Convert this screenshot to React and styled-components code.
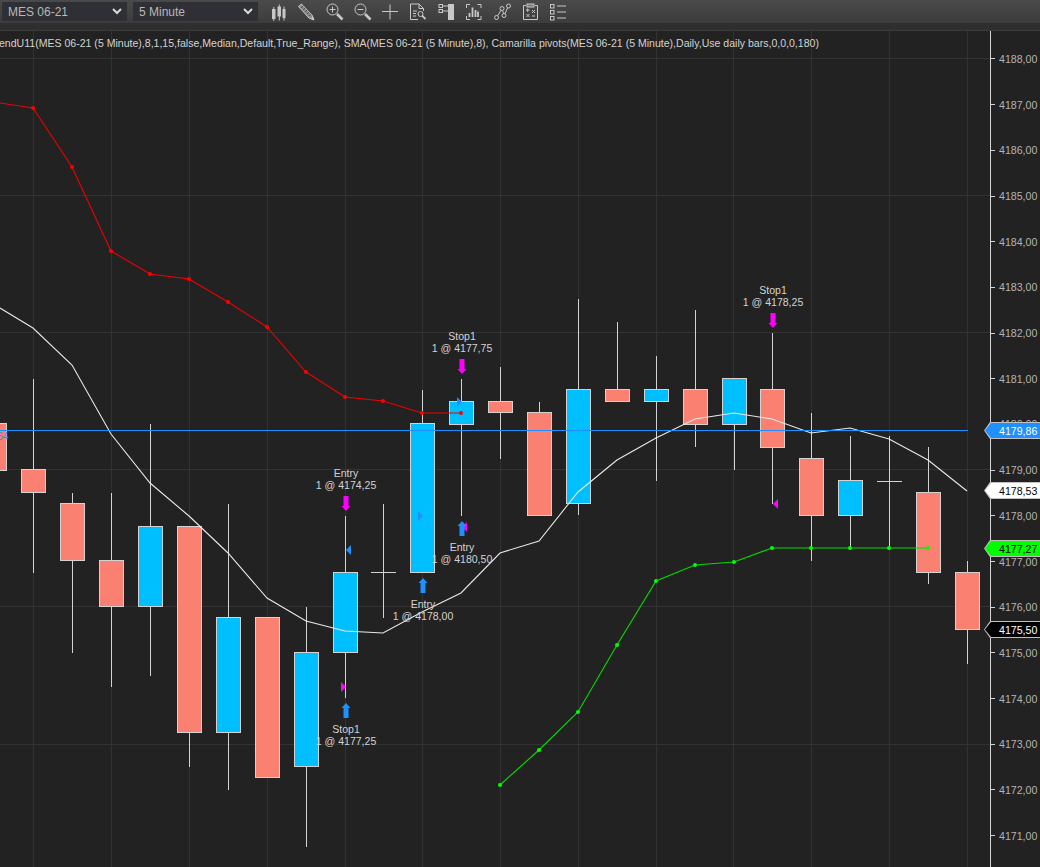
import React from "react";
import styled, { createGlobalStyle } from "styled-components";

const GlobalStyle = createGlobalStyle`
  html, body {
    margin: 0;
    padding: 0;
    background: #222222;
    overflow: hidden;
  }
`;

const BODY_W = 24;
const TOP = 31;
const PLOT_H = 836;

const priceTicks = [];
for (let p = 4188; p >= 4171; p--) priceTicks.push(p);
const priceY = (p) => 59 + (4188 - p) * 45.7;

// bars right of 345 sit a little tighter than 39px
const barX = (x) => (x <= 345 ? x : Math.round(344.5 + Math.round((x - 345) / 39) * 38.9));

// x, wick top, wick bottom, body top, body bottom, kind
const candles = [
  [-6, 423, 470, 423, 470, "down"],
  [33, 379, 573, 469, 492, "down"],
  [72, 493, 653, 503, 560, "down"],
  [111, 493, 687, 560, 606, "down"],
  [150, 424, 676, 526, 606, "up"],
  [189, 526, 767, 526, 732, "down"],
  [228, 504, 790, 617, 732, "up"],
  [267, 617, 777, 617, 777, "down"],
  [306, 607, 847, 652, 766, "up"],
  [345, 516, 698, 572, 652, "up"],
  [384, 504, 618, 572, 572, "doji"],
  [423, 390, 572, 423, 572, "up"],
  [462, 379, 516, 401, 424, "up"],
  [501, 367, 459, 401, 412, "down"],
  [540, 402, 516, 412, 515, "down"],
  [579, 299, 515, 389, 503, "up"],
  [618, 322, 401, 389, 401, "down"],
  [657, 356, 481, 389, 401, "up"],
  [696, 310, 447, 389, 424, "down"],
  [735, 378, 470, 378, 424, "up"],
  [774, 333, 504, 389, 447, "down"],
  [813, 413, 561, 458, 515, "down"],
  [852, 436, 550, 480, 515, "up"],
  [891, 436, 550, 481, 481, "doji"],
  [930, 447, 584, 492, 572, "down"],
  [969, 561, 664, 572, 629, "down"],
];

const redLine = [[0, 103], [33, 108], [72, 167], [111, 251], [150, 274], [189, 279], [228, 302], [267, 327], [306, 372], [345, 397], [384, 401], [423, 413], [462, 413]];
const whiteLine = [[0, 308], [33, 328], [72, 365], [111, 434], [150, 483], [189, 516], [228, 553], [267, 598], [306, 621], [345, 631], [384, 633], [423, 612], [462, 593], [501, 553], [540, 541], [579, 492], [618, 460], [657, 438], [696, 419], [735, 413], [774, 419], [813, 433], [852, 428], [891, 439], [930, 460], [969, 491]];
const greenLine = [[501, 785], [540, 750], [579, 712], [618, 645], [657, 581], [696, 565], [735, 562], [774, 548], [813, 548], [852, 548], [891, 548], [930, 548]];

const gridColumns = [33, 111, 189, 267, 345, 422, 500, 578, 656, 733, 811, 889, 967];

const orderLabels = [
  { x: 346, y: 477, lines: ["Entry", "1 @ 4174,25"] },
  { x: 462, y: 340, lines: ["Stop1", "1 @ 4177,75"] },
  { x: 462, y: 551, lines: ["Entry", "1 @ 4180,50"] },
  { x: 423, y: 608, lines: ["Entry", "1 @ 4178,00"] },
  { x: 346, y: 733, lines: ["Stop1", "1 @ 4177,25"] },
  { x: 773, y: 294, lines: ["Stop1", "1 @ 4178,25"] },
];

const orderArrows = [
  { x: 346, y: 496, dir: "down", color: "#ff00ff" },
  { x: 462, y: 359, dir: "down", color: "#ff00ff" },
  { x: 773, y: 313, dir: "down", color: "#ff00ff" },
  { x: 462, y: 521, dir: "up", color: "#1e90ff" },
  { x: 423, y: 578, dir: "up", color: "#1e90ff" },
  { x: 346, y: 703, dir: "up", color: "#1e90ff" },
];

// fill markers: base x, y, direction
const fillMarkers = [
  [351, 550, "left", "#1e90ff"],
  [418, 516, "right", "#1e90ff"],
  [457, 402, "right", "#1e90ff"],
  [467, 527, "left", "#ff00ff"],
  [341, 687, "right", "#ff00ff"],
  [778, 504, "left", "#ff00ff"],
];

const axisBadges = [
  { y: 430, bg: "#1e90ff", fg: "#ffffff", label: "4179,86" },
  { y: 490, bg: "#ffffff", fg: "#000000", label: "4178,53" },
  { y: 548, bg: "#00ff00", fg: "#000000", label: "4177,27" },
  { y: 629, bg: "#000000", fg: "#ffffff", label: "4175,50" },
];

const points = (line) => line.map(([x, y]) => `${barX(x)},${y}`).join(" ");

const ArrowMark = ({ x, y, dir, color }) => {
  const d =
    dir === "down"
      ? `M${x - 2.5} ${y} h5 v10 h2 l-4.5 5 l-4.5 -5 h2 z`
      : `M${x - 2.5} ${y + 15} h5 v-10 h2 l-4.5 -5 l-4.5 5 h2 z`;
  return <path d={d} fill={color} />;
};

const Candle = ({ c }) => {
  const [rawX, wickTop, wickBottom, bodyTop, bodyBottom, kind] = c;
  const x = barX(rawX);
  return (
    <g>
      <line x1={x + 0.5} x2={x + 0.5} y1={wickTop} y2={wickBottom} stroke="#d3d3d3" />
      {kind === "doji" ? (
        <line x1={x - 12} x2={x + 13} y1={bodyTop + 0.5} y2={bodyTop + 0.5} stroke="#d3d3d3" />
      ) : (
        <CandleBody
          x={x - BODY_W / 2 + 0.5}
          y={bodyTop + 0.5}
          width={BODY_W}
          height={bodyBottom - bodyTop}
          $kind={kind}
        />
      )}
    </g>
  );
};

const Dots = ({ line, color }) =>
  line.map(([x, y]) => <circle key={x} cx={barX(x)} cy={y} r="2" fill={color} />);

const ChartPlot = () => (
  <PlotSvg viewBox={`0 0 990 ${PLOT_H}`} width="990" height={PLOT_H}>
    <g transform={`translate(0 ${-TOP})`}>
      {priceTicks.map((p) =>
        (4188 - p) % 3 === 0 ? (
          <line key={p} x1="0" x2="990" y1={Math.round(priceY(p)) - 0.5} y2={Math.round(priceY(p)) - 0.5} stroke="#323232" />
        ) : null
      )}
      {gridColumns.map((x) => (
        <line key={x} x1={x + 0.5} x2={x + 0.5} y1={TOP} y2={PLOT_H + TOP} stroke="#323232" />
      ))}
      {candles.map((c) => (
        <Candle key={c[0]} c={c} />
      ))}
      <polyline points={points(whiteLine)} fill="none" stroke="#e8e8e8" strokeWidth="1.1" />
      <polyline points={points(redLine)} fill="none" stroke="#ee0000" strokeWidth="1.1" />
      <Dots line={redLine.slice(1)} color="#ff0000" />
      <polyline points={points(greenLine)} fill="none" stroke="#00dd00" strokeWidth="1.1" />
      <Dots line={greenLine} color="#00ff00" />
      <line x1="0" x2="968" y1="430.5" y2="430.5" stroke="#1e90ff" />
      <OrderText x="-3" y="440" $color="#1e90ff">64</OrderText>
      {fillMarkers.map(([x, y, dir, color]) => (
        <path
          key={`${x}-${y}`}
          d={dir === "right" ? `M${x} ${y - 5} l5 5 l-5 5 z` : `M${x} ${y - 5} l-5 5 l5 5 z`}
          fill={color}
        />
      ))}
      {orderArrows.map((a) => (
        <ArrowMark key={`${a.x}-${a.y}`} {...a} />
      ))}
      {orderLabels.map((l) => (
        <OrderText key={`${l.x}-${l.y}`} x={l.x} y={l.y} textAnchor="middle">
          <tspan x={l.x}>{l.lines[0]}</tspan>
          <tspan x={l.x} dy="12">{l.lines[1]}</tspan>
        </OrderText>
      ))}
    </g>
  </PlotSvg>
);

const ICON = { fill: "none", stroke: "#c8c8c8", strokeWidth: 1 };
const SOLID = "#c8c8c8";

const toolIcons = [
  // candles
  <g key="candles" fill={SOLID}>
    <rect x="2" y="6" width="3.5" height="10" /><rect x="3.3" y="4" width="1" height="14" />
    <rect x="7.5" y="3.5" width="3.5" height="10" /><rect x="8.8" y="1.5" width="1" height="16" />
    <rect x="12.5" y="6" width="3" height="9" /><rect x="13.5" y="3.5" width="1" height="14" />
  </g>,
  // pencil
  <g key="pencil">
    <path d="M0.5 3.5 L3.5 1 L14 12 L16 17 L11 15 Z" fill="#8c8c8c" stroke={SOLID} strokeWidth="1" />
    <path d="M3 5 L5.5 2.8 M5 7 L7.5 4.8 M7 9 L9.5 6.8 M9 11 L11.5 8.8 M11 13 L13.5 10.8" stroke="#3c3c3c" strokeWidth="0.8" />
    <path d="M13 16 L16 17 L15 13.5 Z" fill={SOLID} />
  </g>,
  // zoom in
  <g key="zoomin" {...ICON}>
    <circle cx="6.5" cy="6.5" r="5.5" />
    <path d="M3.5 6.5 h6 M6.5 3.5 v6" />
    <path d="M11 11 L16.5 16.5" strokeWidth="2.6" />
  </g>,
  // zoom out
  <g key="zoomout" {...ICON}>
    <circle cx="6.5" cy="6.5" r="5.5" />
    <path d="M3.5 6.5 h6" />
    <path d="M11 11 L16.5 16.5" strokeWidth="2.6" />
  </g>,
  // crosshair
  <g key="cross" {...ICON}><path d="M0 8.5 h16 M8 1.5 v15" /></g>,
  // document search
  <g key="doc" {...ICON}>
    <path d="M8 16.5 H0.5 V1 H9 L13.5 5.5 V8 M9 1 V5.5 H13.5" />
    <path d="M3 8 h4 M3 10.5 h3 M3 13 h3" />
    <circle cx="10.5" cy="11" r="2.5" />
    <path d="M12.3 12.8 L15.5 16" strokeWidth="1.8" />
  </g>,
  // rows beside a solid bar
  <g key="profile">
    <rect x="1" y="1.5" width="3.5" height="3" {...ICON} />
    <rect x="1" y="6.5" width="3.5" height="3" {...ICON} />
    <path d="M4.5 3 h6 M4.5 8 h6" {...ICON} />
    <rect x="10" y="1" width="6" height="16" fill={SOLID} />
  </g>,
  // bars in brackets
  <g key="scan" {...ICON}>
    <path d="M0.5 5 V1.5 H4 M11.5 1.5 H15 V5 M15 13 V16.5 H11.5 M4 16.5 H0.5 V13" />
    <path d="M3.5 14 V10 M6.5 14 V4.5 M9.5 14 V7 M12 14 V8.5" strokeWidth="1.8" />
  </g>,
  // nodes
  <g key="nodes" {...ICON}>
    <circle cx="2.5" cy="14.5" r="2" /><circle cx="8" cy="5.5" r="2" />
    <circle cx="10" cy="12.5" r="2" /><circle cx="14.5" cy="3" r="2" />
    <path d="M3.6 12.8 L7 7.2 M8.6 7.4 L9.5 10.6 M11 10.8 L13.5 4.8" />
  </g>,
  // calculator sheet
  <g key="calc" {...ICON}>
    <path d="M4 2.5 H1.5 V16.5 H15.5 V2.5 H13" />
    <rect x="5" y="1" width="7" height="3" fill="#7a7a7a" />
    <path d="M4 7 h3.5 M5.7 5.5 v3.5 M10 7 l3 3 M13 7 l-3 3 M4.5 11 l3 3 M7.5 11 l-3 3 M10 13 h3" strokeWidth="1" />
  </g>,
  // list
  <g key="list" {...ICON}>
    <rect x="0.5" y="1.5" width="3.5" height="3.5" />
    <rect x="0.5" y="7.5" width="3.5" height="3.5" />
    <rect x="0.5" y="13.5" width="3.5" height="3.5" />
    <path d="M7 3 h9 M7 9 h9 M7 15 h9" />
  </g>,
];

const Chevron = () => (
  <svg width="10" height="7" viewBox="0 0 10 7">
    <path d="M1 1 L5 5 L9 1" fill="none" stroke="#d8d8d8" strokeWidth="2" />
  </svg>
);

const App = () => (
  <>
    <GlobalStyle />
    <Page>
      <Toolbar>
        <SelectBox>
          <span>MES 06-21</span>
          <Chevron />
        </SelectBox>
        <SelectBox>
          <span>5 Minute</span>
          <Chevron />
        </SelectBox>
        <IconRow>
          {toolIcons.map((icon) => (
            <ToolIcon key={icon.key} width="18" height="18" viewBox="0 0 18 18">
              {icon}
            </ToolIcon>
          ))}
        </IconRow>
      </Toolbar>
      <SubBar />
      <ChartRow>
        <PlotArea>
          <ChartPlot />
          <Legend>
            endU11(MES 06-21 (5 Minute),8,1,15,false,Median,Default,True_Range), SMA(MES 06-21 (5 Minute),8), Camarilla pivots(MES 06-21 (5 Minute),Daily,Use daily bars,0,0,0,180)
          </Legend>
        </PlotArea>
        <Axis>
          <AxisTicks>
            {priceTicks.map((p) => (
              <AxisTick key={p}>{p},00</AxisTick>
            ))}
          </AxisTicks>
          {axisBadges.map((b) => (
            <PriceBadge key={b.label} $y={b.y - TOP} $bg={b.bg} $fg={b.fg}>
              <span>{b.label}</span>
            </PriceBadge>
          ))}
        </Axis>
      </ChartRow>
    </Page>
  </>
);

export default App;

const Page = styled.div`
  width: 1040px;
  height: 867px;
  display: flex;
  flex-direction: column;
  overflow: hidden;
  background: #222222;
  font-family: "Liberation Sans", Arial, sans-serif;
`;

const Toolbar = styled.div`
  height: 23px;
  flex: none;
  display: flex;
  align-items: center;
  gap: 6px;
  padding-left: 2px;
  background: linear-gradient(#4a4a4a, #3c3c3c);
`;

const SelectBox = styled.div`
  width: 125px;
  height: 19px;
  box-sizing: border-box;
  display: flex;
  align-items: center;
  justify-content: space-between;
  padding: 0 5px 0 6px;
  background: #2f3035;
  color: #b8b8b8;
  font-size: 12px;
`;

const IconRow = styled.div`
  display: flex;
  gap: 10px;
  margin-left: 6px;
  padding-top: 1px;
`;

const ToolIcon = styled.svg`
  display: block;
  flex: none;
`;

const SubBar = styled.div`
  height: 8px;
  flex: none;
  box-sizing: border-box;
  background: #2e2e2e;
  border-bottom: 1px solid #3c3c3c;
`;

const ChartRow = styled.div`
  flex: 1;
  display: flex;
  min-height: 0;
`;

const PlotArea = styled.div`
  position: relative;
  width: 990px;
  flex: none;
  overflow: hidden;
`;

const PlotSvg = styled.svg`
  display: block;
`;

const CandleBody = styled.rect`
  fill: ${(p) => (p.$kind === "up" ? "#00bfff" : "#fa8072")};
  stroke: #d3d3d3;
`;

const OrderText = styled.text`
  font-family: "Liberation Sans", Arial, sans-serif;
  font-size: 10.56px;
  fill: ${(p) => p.$color || "#d3d3d3"};
`;

const Legend = styled.div`
  position: absolute;
  top: 5px;
  left: -1px;
  white-space: nowrap;
  color: #d3d3d3;
  font-size: 10.56px;
  line-height: 14px;
`;

const Axis = styled.div`
  position: relative;
  flex: 1;
  border-left: 1px solid #d3d3d3;
`;

const AxisTicks = styled.div`
  display: flex;
  flex-direction: column;
  padding-top: 5.15px;
`;

const AxisTick = styled.div`
  height: 45.7px;
  flex: none;
  display: flex;
  align-items: center;
  gap: 4px;
  color: #b4b4b4;
  font-size: 10.6px;

  &::before {
    content: "";
    width: 4px;
    height: 1px;
    background: #d3d3d3;
  }
`;

const PriceBadge = styled.div`
  position: absolute;
  left: -7px;
  top: ${(p) => p.$y - 8}px;
  width: 57px;
  height: 17px;
  box-sizing: border-box;
  padding-left: 15px;
  display: flex;
  align-items: center;
  background: #c0c0c0;
  color: ${(p) => p.$fg};
  font-size: 10.6px;
  clip-path: polygon(6px 0, 100% 0, 100% 100%, 6px 100%, 0 50%);

  &::before {
    content: "";
    position: absolute;
    inset: 1px 0 1px 1px;
    background: ${(p) => p.$bg};
    clip-path: polygon(6px 0, 100% 0, 100% 100%, 6px 100%, 0 50%);
  }

  span {
    position: relative;
  }
`;
